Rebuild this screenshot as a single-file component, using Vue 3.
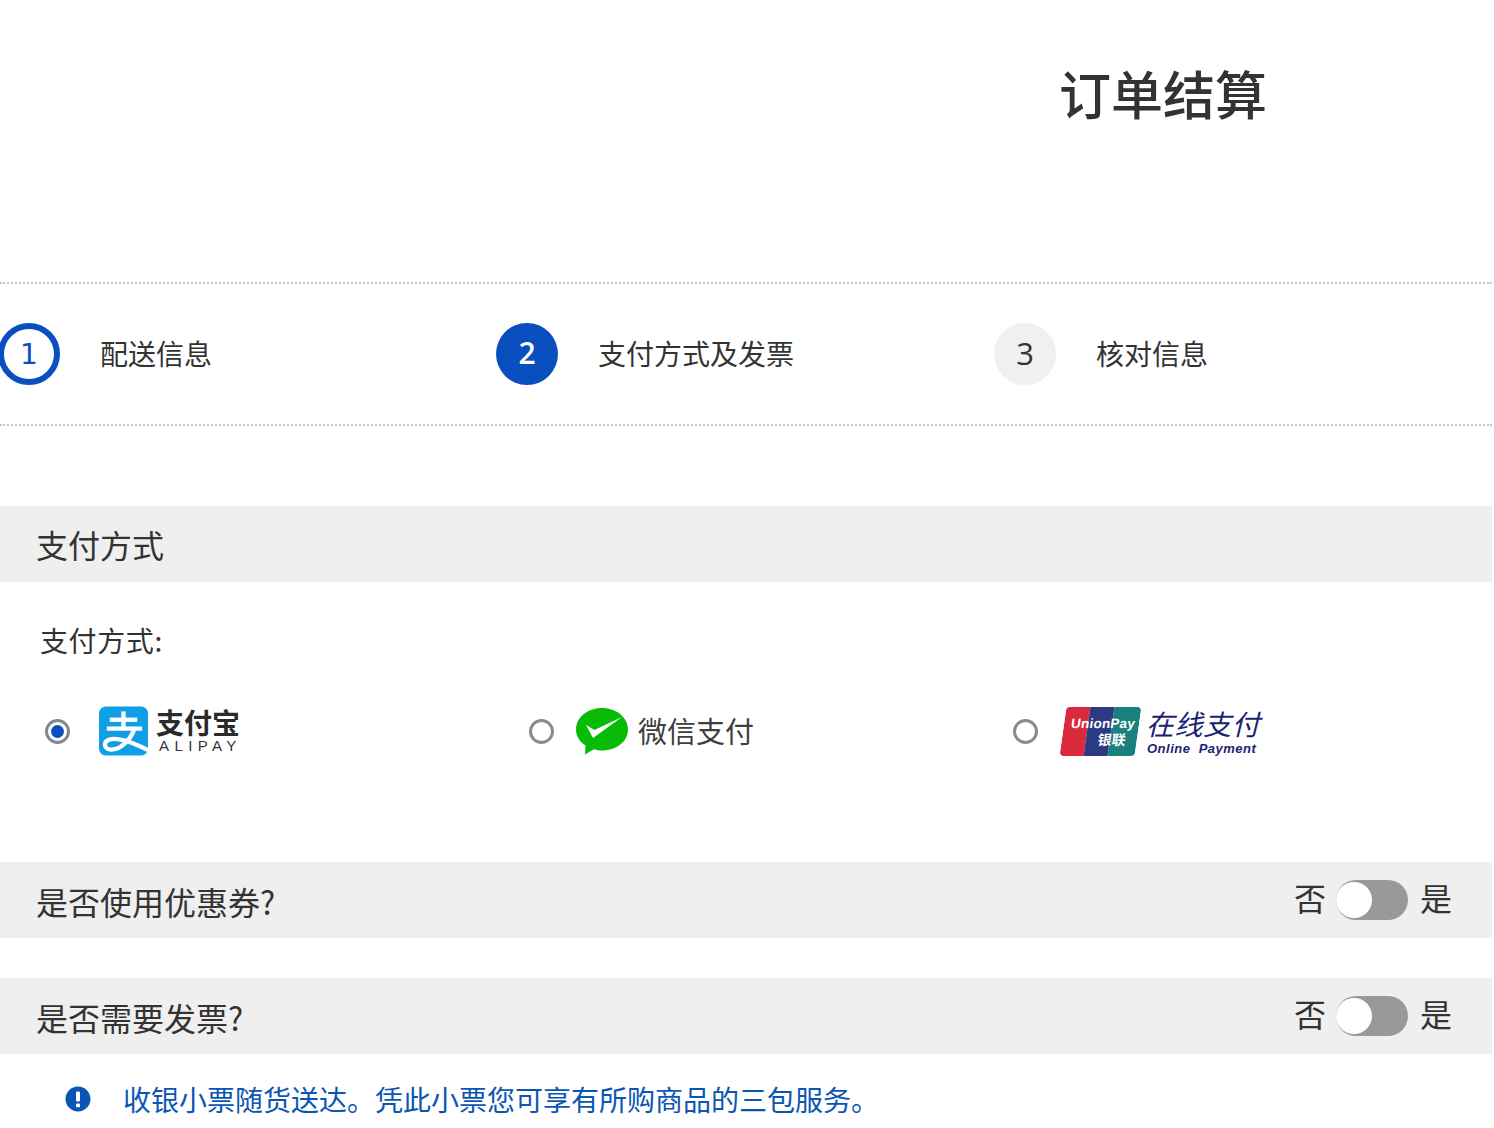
<script setup>
const steps = [
  { n: 1, label: '配送信息', state: 'done' },
  { n: 2, label: '支付方式及发票', state: 'active' },
  { n: 3, label: '核对信息', state: 'todo' },
]
</script>

<template>
  <div class="page">
    <header class="head"><h1>订单结算</h1></header>

    <ol class="steps">
      <li v-for="s in steps" :key="s.n" class="step">
        <span class="num" :class="s.state">{{ s.n }}</span>
        <span class="step-label">{{ s.label }}</span>
      </li>
    </ol>

    <section class="bar pay-bar"><h2>支付方式</h2></section>

    <p class="pay-label">支付方式:</p>

    <div class="methods">
      <label class="method">
        <span class="radio on"></span>
        <span class="logo alipay">
          <svg width="49" height="50" viewBox="0 0 50 50">
            <rect width="50" height="50" rx="7" fill="#0f9fe6" />
            <g fill="none" stroke="#fff" stroke-width="4.400">
              <path d="M11 13.500H39" />
              <path d="M25 5V22" />
              <path d="M8 22.500H44" />
              <path d="M36 23C32 35 21 44.500 12 44C4.500 43.500 4 35 11.500 33.500C21 31.500 35 37 50 44.500" />
            </g>
          </svg>
          <span class="ali-text">
            <b>支付宝</b>
            <small>ALIPAY</small>
          </span>
        </span>
      </label>

      <label class="method">
        <span class="radio"></span>
        <span class="logo wechat">
          <svg width="54" height="48" viewBox="0 0 54 48">
            <path d="M27 1C41.500 1 53 10.500 53 22.500C53 34.500 41.500 43.500 27 43.500C24 43.500 21.500 43.200 19 42.300L10 47.500L10.500 38.500C4.500 34.500 1 29 1 22.500C1 10.500 12.500 1 27 1Z" fill="#09bb07" />
            <path d="M11 18L19.500 23L47 10L18 31Z" fill="#fff" />
          </svg>
          <span class="we-text">微信支付</span>
        </span>
      </label>

      <label class="method">
        <span class="radio"></span>
        <span class="logo union">
          <span class="card">
            <i class="c1"></i><i class="c2"></i><i class="c3"></i>
            <span class="card-text"><em>UnionPay</em><strong>银联</strong></span>
          </span>
          <span class="up-text">
            <b>在线支付</b>
            <small>Online&nbsp; Payment</small>
          </span>
        </span>
      </label>
    </div>

    <section class="bar toggle-bar first">
      <h2>是否使用优惠券?</h2>
      <div class="switch"><span class="no">否</span><i class="track"><i class="knob"></i></i><span>是</span></div>
    </section>

    <section class="bar toggle-bar second">
      <h2>是否需要发票?</h2>
      <div class="switch"><span class="no">否</span><i class="track"><i class="knob"></i></i><span>是</span></div>
    </section>

    <p class="note">
      <svg width="26" height="26" viewBox="0 0 26 26">
        <circle cx="13" cy="13" r="12.500" fill="#0b55b5" />
        <rect x="11" y="5.500" width="4" height="10" rx="1" fill="#fff" />
        <rect x="11" y="17.500" width="4" height="3.800" rx="1" fill="#fff" />
      </svg>
      <span>收银小票随货送达。凭此小票您可享有所购商品的三包服务。</span>
    </p>
  </div>
</template>

<style>
html, body { margin: 0; background: #fff; overflow: hidden; }
</style>

<style scoped>
.page {
  width: 1492px;
  height: 1128px;
  overflow: hidden;
  color: #333;
  font-family: "Noto Sans CJK SC", "Liberation Sans", sans-serif;
}
.head { height: 282px; padding-left: 1059px; box-sizing: border-box; }
h1 { margin: 0; padding-top: 55px; font-size: 52px; line-height: 76px; font-weight: 500; }
.steps {
  list-style: none;
  margin: 0;
  padding: 0;
  height: 144px;
  box-sizing: border-box;
  border-top: 2px dotted #c4c4c4;
  border-bottom: 2px dotted #c4c4c4;
  display: grid;
  grid-template-columns: 498px 498px 1fr;
  align-items: center;
}
.step { display: flex; align-items: center; margin-left: -2px; gap: 40px; }
.num {
  width: 62px;
  height: 62px;
  box-sizing: border-box;
  border-radius: 50%;
  display: flex;
  align-items: center;
  justify-content: center;
  font-family: "DejaVu Sans", sans-serif;
  font-size: 28px;
}
.num.done { border: 6px solid #0a4fc0; color: #0a4fc0; }
.num.active { background: #0a4fc0; color: #fff; font-family: "Open Sans", sans-serif; font-weight: 600; font-size: 30px; padding-bottom: 3px; }
.num.todo { background: #f0f0f0; color: #333; font-family: "Open Sans", sans-serif; font-size: 31px; padding-bottom: 3px; }
.step-label { font-size: 28px; line-height: 40px; font-weight: 400; padding-bottom: 3px; }
.bar { background: #efefef; height: 76px; box-sizing: border-box; display: flex; align-items: center; justify-content: space-between; padding: 2px 40px 0 36px; }
h2 { margin: 0; font-size: 32px; font-weight: 400; line-height: 44px; }
.pay-bar { margin-top: 80px; padding-top: 0; }
.pay-label { margin: 38px 0 0 40px; font-size: 28px; line-height: 40px; font-weight: 400; letter-spacing: 0.6px; }
.methods { display: grid; grid-template-columns: 484px 484px 1fr; margin-top: 43px; height: 159px; padding-left: 45px; box-sizing: border-box; align-items: start; }
.method { display: flex; align-items: center; height: 56px; }
.radio {
  width: 25px;
  height: 25px;
  box-sizing: border-box;
  border-radius: 50%;
  border: 3px solid #8a8a8a;
  background: #fff;
  flex: none;
  position: relative;
}
.radio.on { border-color: #808792; }
.radio.on::after {
  content: "";
  position: absolute;
  inset: 3px;
  border-radius: 50%;
  background: #0a4fc0;
}
.logo { display: flex; align-items: center; }
.alipay { margin-left: 29px; gap: 8px; }
.ali-text { display: flex; flex-direction: column; color: #2a2a2a; }
.ali-text b { font-size: 28px; line-height: 30px; font-weight: 700; margin-top: -1px; }
.ali-text small { font-family: "Liberation Sans", sans-serif; font-size: 15px; line-height: 17px; letter-spacing: 5.400px; padding-left: 3px; color: #333; }
.wechat { margin-left: 21px; gap: 9px; }
.we-text { font-size: 29px; line-height: 40px; font-weight: 400; color: #3f3f3f; padding-bottom: 2px; }
.union { margin-left: 25px; gap: 8px; }
.card { width: 75px; height: 49px; position: relative; display: flex; overflow: hidden; transform: skewX(-8deg); border-radius: 4px; flex: none; }
.c1 { width: 24px; background: #d9293d; }
.c2 { width: 24px; background: #2b3a82; }
.c3 { width: 27px; background: #19807f; }
.card-text { position: absolute; inset: 0; display: flex; flex-direction: column; align-items: flex-end; padding: 9px 4px 0 0; color: #fff; }
.card-text em { font-family: "Liberation Sans", sans-serif; font-size: 13.500px; line-height: 16px; font-weight: 700; font-style: normal; letter-spacing: 0.2px; }
.card-text strong { font-size: 14px; line-height: 15px; font-weight: 700; margin-right: 7px; }
.up-text { display: flex; flex-direction: column; color: #1c2270; }
.up-text b { font-size: 28px; line-height: 35px; font-weight: 400; font-style: italic; letter-spacing: 0.6px; }
.up-text small { font-family: "Liberation Sans", sans-serif; font-size: 13px; line-height: 16px; font-weight: 700; font-style: italic; letter-spacing: 0.5px; margin-left: 1px; }
.toggle-bar.second { margin-top: 40px; }
.switch { display: flex; align-items: center; gap: 12px; font-size: 32px; font-weight: 400; margin-top: -2px; }
.switch span { padding-bottom: 7px; }
.switch .no { margin-right: -2px; }
.track { display: block; width: 72px; height: 40px; border-radius: 20px; background: #999; position: relative; }
.knob { position: absolute; left: 0; top: 2px; width: 36px; height: 36px; border-radius: 50%; background: #fff; }
.note { display: flex; align-items: center; gap: 32px; margin: 25px 0 0 65px; font-size: 28px; line-height: 40px; font-weight: 400; color: #0b55b5; }
</style>
